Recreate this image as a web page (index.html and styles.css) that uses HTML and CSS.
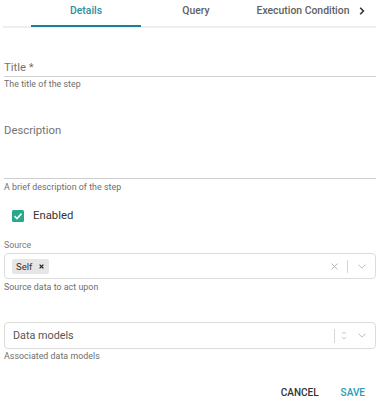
FILE: index.html
```html
<!DOCTYPE html>
<html>
<head>
<meta charset="utf-8">
<link rel="stylesheet" href="styles.css">
</head>
<body>
<div class="tabs">
  <div class="tab active">Details</div>
  <div class="tab">Query</div>
  <div class="tab tab-last">Execution Condition</div>
  <div class="tab-next">
    <svg width="6" height="8" viewBox="0 0 6 8"><path d="M1.2 0.8 L4.4 4 L1.2 7.2" fill="none" stroke="#333" stroke-width="1.6"/></svg>
  </div>
</div>
<div class="form">
  <div class="line-field title-field"><span class="line-label">Title *</span></div>
  <div class="helper helper-title">The title of the step</div>

  <div class="line-field desc-field"><span class="line-label">Description</span></div>
  <div class="helper helper-desc">A brief description of the step</div>

  <div class="check-row">
    <span class="checkbox">
      <svg width="12" height="12" viewBox="0 0 12 12"><path d="M2.6 6.2 L5 8.5 L9.5 3.6" fill="none" stroke="#fff" stroke-width="1.6"/></svg>
    </span>
    <span class="check-text">Enabled</span>
  </div>

  <div class="small-label">Source</div>
  <div class="select select-source">
    <span class="chip">Self<svg class="chip-x" width="5" height="5" viewBox="0 0 5 5"><path d="M0.6 0.6 L4.4 4.4 M4.4 0.6 L0.6 4.4" stroke="#222" stroke-width="1.3"/></svg></span>
    <span class="spacer"></span>
    <svg class="clear" width="7" height="7" viewBox="0 0 7 7"><path d="M0.5 0.5 L6.5 6.5 M6.5 0.5 L0.5 6.5" stroke="#b8b8b8" stroke-width="1"/></svg>
    <span class="sep sep-source"></span>
    <svg class="chev" width="8" height="5" viewBox="0 0 8 5"><path d="M0.5 0.6 L4 4.2 L7.5 0.6" fill="none" stroke="#bdbdbd" stroke-width="1"/></svg>
  </div>
  <div class="helper helper-source">Source data to act upon</div>

  <div class="select select-models">
    <span class="placeholder">Data models</span>
    <span class="spacer"></span>
    <span class="sep sep-models"></span>
    <svg class="updown" width="6" height="9" viewBox="0 0 6 9"><path d="M0.8 3.2 L3 1 L5.2 3.2 M0.8 5.8 L3 8 L5.2 5.8" fill="none" stroke="#c4c4c4" stroke-width="0.9"/></svg>
    <svg class="chev" width="8" height="5" viewBox="0 0 8 5"><path d="M0.5 0.6 L4 4.2 L7.5 0.6" fill="none" stroke="#bdbdbd" stroke-width="1"/></svg>
  </div>
  <div class="helper helper-models">Associated data models</div>

  <div class="actions">
    <span class="btn btn-cancel">CANCEL</span>
    <span class="btn btn-save">SAVE</span>
  </div>
</div>
</body>
</html>
```

FILE: styles.css
```css
* { box-sizing: border-box; }
body {
  margin: 0;
  width: 380px;
  height: 402px;
  background: #fff;
  font-family: Roboto, "Liberation Sans", sans-serif;
  overflow: hidden;
}
.tabs {
  display: flex;
  margin: 0 4px 0 3px;
  height: 28px;
  padding-left: 28px;
  border-bottom: 2px solid #eeeeee;
}
.tab {
  position: relative;
  width: 110px;
  height: 26px;
  line-height: 22px;
  text-align: center;
  font-size: 10.4px;
  font-weight: 500;
  color: #616161;
  white-space: nowrap;
}
.tab.active { color: #2a8ea5; }
.tab.active::after {
  content: "";
  position: absolute;
  left: 0;
  right: 0;
  bottom: -1px;
  height: 2px;
  background: #1b7f98;
}
.tab-last { width: 104px; }
.tab-next {
  width: 14px;
  height: 22px;
  display: flex;
  align-items: center;
  justify-content: center;
}
.form {
  padding: 0 4px;
  display: flex;
  flex-direction: column;
}
.line-field {
  display: flex;
  align-items: flex-start;
  border-bottom: 1.5px solid #cfcfcf;
}
.title-field { height: 49px; padding-top: 33px; }
.desc-field { margin-top: 34px; height: 55px; }
.line-label {
  font-size: 11.3px;
  line-height: 13px;
  color: #737373;
}
.helper {
  font-size: 8.8px;
  line-height: 11px;
  color: #6d6d6d;
  letter-spacing: 0.05px;
}
.helper-title { margin-top: 2px; }
.helper-desc { margin-top: 3px; }
.check-row {
  margin-top: 17px;
  padding-left: 8px;
  display: flex;
  align-items: center;
  gap: 9px;
  height: 12px;
}
.checkbox {
  width: 12px;
  height: 12px;
  border-radius: 1.5px;
  background: #27a98b;
  display: flex;
}
.check-text {
  font-size: 11.3px;
  line-height: 12px;
  color: #333;
}
.small-label {
  margin-top: 18px;
  font-size: 8.8px;
  line-height: 11px;
  color: #7a7a7a;
}
.select {
  display: flex;
  align-items: center;
  border: 1px solid #dcdcdc;
  border-radius: 4px;
  padding-right: 9px;
}
.select-source { margin-top: 2px; height: 26px; padding-left: 7px; }
.select-models { margin-top: 29px; height: 27px; padding-left: 7px; }
.spacer { flex: 1; }
.chip {
  display: flex;
  align-items: center;
  height: 15px;
  padding: 0 5px 0 4px;
  background: #e6e6e6;
  border-radius: 2px;
  font-size: 9.6px;
  color: #333;
}
.chip-x { margin-left: 7px; }
.sep {
  width: 1px;
  background: #d6d6d6;
}
.sep-source { height: 13px; margin: 0 10px 0 9px; }
.sep-models { height: 14px; margin-right: 6px; }
.updown { margin-right: 11px; }
.placeholder {
  font-size: 10.8px;
  color: #555;
  padding-left: 1px;
}
.helper-source { margin-top: 3px; }
.helper-models { margin-top: 2px; }
.actions {
  margin-top: 25px;
  display: flex;
  justify-content: flex-end;
  gap: 22px;
  padding-right: 11px;
}
.btn {
  font-size: 10px;
  line-height: 12px;
  font-weight: 500;
}
.btn-cancel { color: #333; }
.btn-save { color: #2a9bb4; }
```
